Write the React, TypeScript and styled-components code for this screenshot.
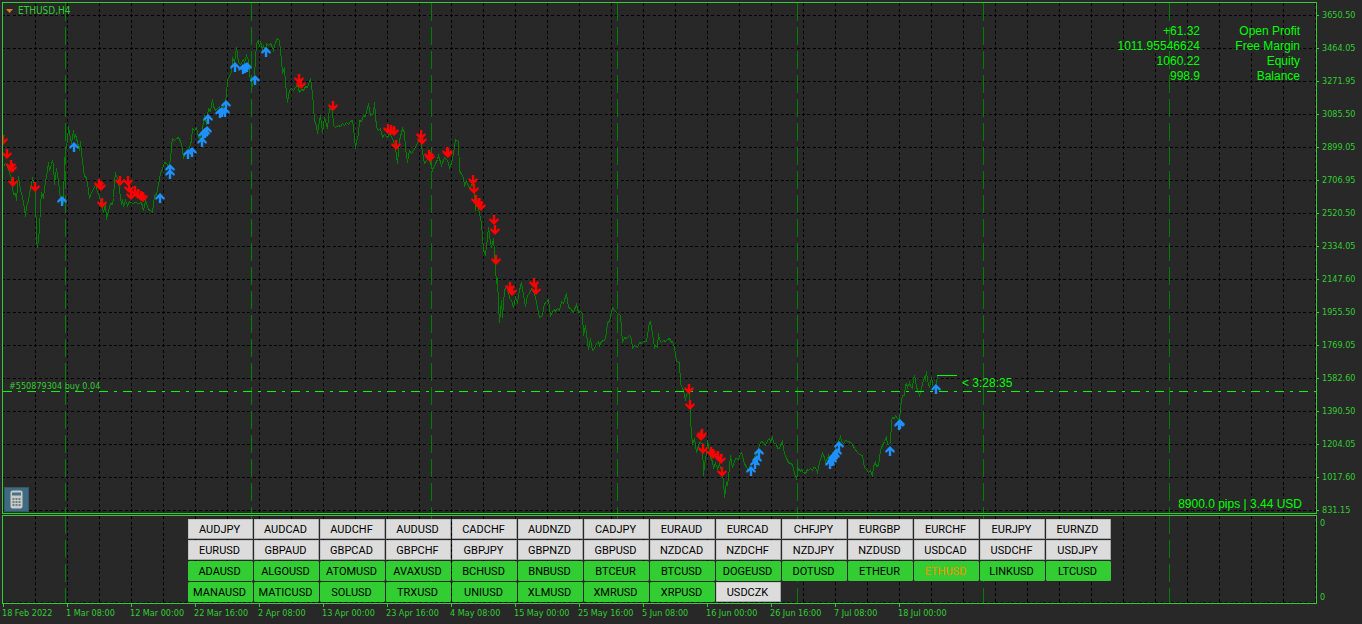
import styled, { createGlobalStyle } from "styled-components";

type Point = [number, number];

const GlobalStyle = createGlobalStyle`
  * {
    box-sizing: border-box;
  }
  body {
    margin: 0;
    background: #282828;
  }
`;

const smallFont = `"DejaVu Sans Condensed", "DejaVu Sans", "Noto Sans", sans-serif`;
const labelFont = `"Liberation Sans", Arial, sans-serif`;

const Terminal = styled.main`
  display: flex;
  flex-direction: column;
  gap: 1px;
  height: 100vh;
  padding: 2px 0 0 2px;
  overflow: hidden;
  background: #282828;
  color: #32cd32;
  font-family: ${smallFont};
  font-size: 9px;
`;

const Row = styled.div<{ $grow?: boolean }>`
  display: flex;
  flex: ${({ $grow }) => ($grow ? "1 1 0" : "none")};
  min-height: 0;
`;

const Frame = styled.section`
  position: relative;
  display: flex;
  flex-direction: column;
  flex: 1;
  min-width: 0;
  border: 1px solid #32cd32;
`;

const Plot = styled.svg`
  position: absolute;
  inset: 0;
  width: 100%;
  height: 100%;
`;

const Header = styled.h1`
  position: relative;
  display: flex;
  align-items: center;
  gap: 5px;
  height: 15px;
  margin: 0;
  padding-left: 3px;
  font-size: 10px;
  line-height: 12px;
  font-weight: 400;
`;

const Account = styled.dl`
  position: relative;
  display: grid;
  justify-content: end;
  margin: 6px 16px 0 0;
  color: #00ff00;
  font: 12px/15px ${labelFont};
  text-align: right;
`;

const AccountLine = styled.div`
  display: flex;
  flex-direction: row-reverse;
  dt {
    width: 100px;
  }
  dd {
    margin: 0;
  }
`;

const ChartFooter = styled.div`
  position: relative;
  display: flex;
  justify-content: space-between;
  align-items: flex-end;
  margin-top: auto;
  padding: 0 14px 1px 1px;
`;

const CalcButton = styled.button`
  display: grid;
  place-items: center;
  width: 25px;
  height: 25px;
  padding: 0;
  border: 1px solid #36566a;
  background: #3f6a84;
`;

const Pips = styled.output`
  color: #00ff00;
  font: 12px/16px ${labelFont};
`;

const PriceAxis = styled.ul`
  display: flex;
  flex-direction: column;
  gap: 21px;
  flex: none;
  width: 45px;
  margin: 0;
  padding: 7px 0 0;
  list-style: none;
`;

const Price = styled.li`
  display: flex;
  align-items: center;
  gap: 3px;
  flex: none;
  height: 12px;
  line-height: 12px;
  &::before {
    content: "";
    width: 2px;
    height: 1px;
    background: #32cd32;
  }
`;

const ZeroAxis = styled.div`
  display: flex;
  flex-direction: column;
  justify-content: space-between;
  width: 45px;
  padding: 2px 3px 1px;
  line-height: 12px;
`;

const SymbolGrid = styled.div`
  position: relative;
  display: grid;
  grid-template-columns: repeat(14, 65px);
  grid-auto-rows: 20px;
  gap: 1px;
  padding: 3px 0 1px 185px;
`;

const SymbolButton = styled.button<{ $crypto: boolean; $active: boolean }>`
  padding: 2px 2px 0 0;
  border: 1px solid;
  border-color: ${({ $crypto }) =>
    $crypto ? "#32cd32" : "#c4c4c4 #a6a6a6 #a6a6a6 #c4c4c4"};
  border-radius: 1px;
  background: ${({ $crypto }) => ($crypto ? "#32cd32" : "#dcdcdc")};
  color: ${({ $active }) => ($active ? "#ff8c00" : "#000")};
  font: 11px/16px Roboto, sans-serif;
`;

const TimeAxis = styled.ul`
  display: flex;
  flex: none;
  height: 20px;
  margin: -1px 0 0;
  padding: 0;
  list-style: none;
`;

const Time = styled.li`
  flex: 0 0 64px;
  line-height: 12px;
  white-space: nowrap;
  &::before {
    content: "";
    display: block;
    width: 1px;
    height: 3px;
    margin-left: 1px;
    background: #32cd32;
  }
`;

const prices = [
  "3650.50", "3464.05", "3271.95", "3085.50", "2899.05", "2706.95", "2520.50", "2334.05",
  "2147.60", "1955.50", "1769.05", "1582.60", "1390.50", "1204.05", "1017.60", "831.15",
];

const times = [
  "18 Feb 2022", "1 Mar 08:00", "12 Mar 00:00", "22 Mar 16:00", "2 Apr 08:00",
  "13 Apr 00:00", "23 Apr 16:00", "4 May 08:00", "15 May 00:00", "25 May 16:00",
  "5 Jun 08:00", "16 Jun 00:00", "26 Jun 16:00", "7 Jul 08:00", "18 Jul 00:00",
];

const account = [
  { label: "Open Profit", value: "+61.32" },
  { label: "Free Margin", value: "1011.95546624" },
  { label: "Equity", value: "1060.22" },
  { label: "Balance", value: "998.9" },
];

const forex = [
  "AUDJPY", "AUDCAD", "AUDCHF", "AUDUSD", "CADCHF", "AUDNZD", "CADJPY", "EURAUD",
  "EURCAD", "CHFJPY", "EURGBP", "EURCHF", "EURJPY", "EURNZD", "EURUSD", "GBPAUD",
  "GBPCAD", "GBPCHF", "GBPJPY", "GBPNZD", "GBPUSD", "NZDCAD", "NZDCHF", "NZDJPY",
  "NZDUSD", "USDCAD", "USDCHF", "USDJPY",
];

const crypto = [
  "ADAUSD", "ALGOUSD", "ATOMUSD", "AVAXUSD", "BCHUSD", "BNBUSD", "BTCEUR", "BTCUSD",
  "DOGEUSD", "DOTUSD", "ETHEUR", "ETHUSD", "LINKUSD", "LTCUSD", "MANAUSD", "MATICUSD",
  "SOLUSD", "TRXUSD", "UNIUSD", "XLMUSD", "XMRUSD", "XRPUSD",
];

const symbols = [...forex, ...crypto, "USDCZK"];

const months = [65, 251, 431, 617, 797, 983, 1169];

const closes = `3,166 5,163 7,166 9,172 11,178 13,194 15,193 16,200 17,185 18,176 20,190 22,196
24,208 25,216 26,206 28,200 30,188 32,178 34,184 35,192 36,240 37,247 38,238 39,230 40,205 41,193
43,197 44,188 46,176 48,162 49,170 51,164 52,160 53,165 54,184 56,168 58,180 59,190 60,199 62,198
63,203 64,160 66,145 67,140 68,126 70,138 71,143 73,130 74,138 75,134 77,142 79,150 80,141 81,152
83,168 84,176 86,177 88,190 89,198 91,192 93,189 95,184 97,191 99,196 101,205 103,212 105,203
106,219 108,210 110,203 112,204 113,197 114,180 115,173 118,180 119,190 121,204 122,199 123,206
125,200 127,205 129,201 132,203 135,202 138,203 141,202 143,210 145,200 148,209 150,210 152,212
153,204 154,195 156,194 158,184 160,173 162,168 164,162 166,163 168,166 170,160 171,145 172,138
174,140 176,138 178,137 180,141 182,148 183,158 185,152 187,150 189,148 190,144 191,140 192,128
194,130 196,127 198,137 200,138 202,128 204,115 206,124 208,108 210,111 212,99 213,106 215,110
217,108 219,106 221,112 223,106 225,102 226,94 227,80 229,75 231,72 232,57 234,62 236,47 238,62
240,64 243,59 244,62 246,55 248,60 249,75 251,82 252,85 254,75 255,58 256,43 258,40 259,46 260,41
262,49 263,46 265,50 266,43 268,45 270,43 272,47 273,50 275,42 277,38 279,40 280,50 281,60 282,72
284,68 285,82 287,102 289,90 291,88 293,90 295,87 297,84 299,92 301,89 303,90 305,86 307,87 310,78
312,93 314,120 316,126 317,133 320,115 322,132 324,117 327,128 329,108 332,110 333,125 335,127
338,125 340,126 342,123 344,125 346,122 348,124 350,121 352,120 353,127 355,148 356,142 358,133
359,120 361,121 363,115 365,116 367,108 368,103 370,115 373,113 374,102 376,127 378,130 380,128
382,137 384,134 387,137 389,133 392,138 395,147 397,163 399,140 402,128 404,132 405,148 407,162
409,150 411,153 413,150 415,147 417,142 420,138 422,152 424,163 426,160 428,158 430,162 432,170
435,163 437,159 438,155 441,165 444,157 447,160 449,167 451,163 453,153 455,139 458,141 459,170
461,174 463,177 464,185 466,181 469,188 472,183 474,193 475,210 476,203 478,207 479,213 481,223
483,250 485,254 487,237 488,227 490,242 491,247 493,238 494,253 495,267 496,283 497,278 498,305
499,322 501,300 502,317 504,290 507,285 509,298 511,300 513,307 515,297 517,302 519,290 521,282
523,295 525,306 527,295 529,293 531,288 533,291 535,297 537,307 539,317 542,315 544,303 546,302
548,299 550,316 552,311 554,309 555,311 557,308 559,310 561,301 563,303 566,293 568,307 570,308
573,312 576,304 578,312 580,311 582,313 583,335 585,325 588,349 590,338 592,350 594,348 596,343
598,341 599,345 601,341 603,340 605,339 607,322 609,321 612,307 614,310 617,313 620,315 622,342
624,337 626,338 629,335 631,338 632,348 634,345 637,347 639,342 641,343 643,341 646,341 648,328
649,322 650,321 652,333 654,347 655,345 657,347 658,333 659,339 661,342 663,340 665,341 667,339
669,338 671,342 672,341 674,347 676,361 679,362 680,383 682,388 683,390 685,400 686,394 689,392
690,420 692,444 694,438 696,452 699,442 702,443 703,475 704,464 706,453 707,440 710,457 712,461
713,467 715,463 717,468 719,464 721,470 723,480 724,497 726,482 727,485 729,467 730,455 732,467
733,464 735,458 738,459 740,453 741,452 744,463 746,467 748,470 750,464 752,463 754,456 757,453
759,444 761,441 763,442 765,445 767,440 769,438 770,441 772,437 773,442 776,444 777,448 779,448
780,445 782,441 784,453 786,458 788,462 790,463 792,464 794,473 796,478 798,468 800,471 801,469
803,472 805,473 807,469 808,470 810,468 812,470 813,467 815,467 817,472 819,462 822,453 824,457
825,462 828,455 830,459 832,457 835,448 837,443 840,436 841,441 843,443 845,440 848,441 850,442
852,444 854,448 857,452 859,454 862,455 864,467 866,469 868,472 870,470 872,476 873,466 875,462
876,466 878,465 880,450 881,447 883,443 884,441 886,436 887,444 890,443 891,420 892,417 894,418
895,415 897,418 899,420 900,407 902,395 904,395 905,384 906,383 907,387 909,382 910,386 912,388
913,378 914,375 916,386 917,390 919,395 921,388 922,383 924,377 925,379 926,371 927,380 929,387
931,377 933,388 935,386 937,376`;

const buys: Point[] = [
  [62, 201], [74, 147], [160, 198], [170, 169], [170, 174], [188, 154], [192, 152], [202, 142],
  [203, 135], [205, 133], [207, 131], [208, 119], [220, 113], [222, 112], [225, 112], [226, 105],
  [235, 67], [243, 69], [245, 68], [247, 67], [255, 80], [266, 52], [751, 471], [755, 464],
  [757, 460], [759, 453], [830, 464], [832, 461], [833, 458], [835, 456], [837, 453], [839, 446],
  [890, 451], [899, 425], [900, 424], [936, 389],
];

const sells: Point[] = [
  [3, 140], [7, 154], [11, 165], [12, 168], [13, 182], [35, 187], [99, 184], [101, 186],
  [102, 203], [120, 181], [128, 181], [129, 188], [131, 195], [135, 191], [138, 194], [141, 196],
  [143, 197], [299, 79], [301, 84], [333, 106], [388, 129], [391, 130], [394, 131], [396, 145],
  [421, 135], [422, 140], [429, 155], [430, 157], [447, 152], [448, 153], [473, 180], [474, 189],
  [476, 200], [479, 203], [481, 206], [494, 220], [495, 230], [496, 260], [510, 287], [512, 291],
  [534, 283], [536, 290], [689, 389], [690, 405], [702, 434], [701, 436], [703, 449], [711, 452],
  [713, 454], [718, 456], [721, 459], [722, 472],
];

// one dash sits on every crossing, cells are 32 x 33
const columnDash = "3 3 3 2 3 3 3 2 3 3 3 2";
const rowDash = "3 2 3 3 3 2 3 2 3 3 3 2";

const columns = Array.from({ length: 80 }, (_, i) => 32.5 + i * 32);
const rows = Array.from({ length: 40 }, (_, i) => 12.5 + i * 33);

const Columns = () => (
  <g shapeRendering="crispEdges">
    {columns.map((x) => (
      <line key={x} x1={x} x2={x} y1="0" y2="100%" stroke="#000" strokeDasharray={columnDash} strokeDashoffset={22} />
    ))}
    {months.map((x) => (
      <line key={x} x1={x - 2.5} x2={x - 2.5} y1="0" y2="100%" stroke="#008000" strokeDasharray="18 6" />
    ))}
  </g>
);

const Arrow = ({ at: [x, y], down }: { at: Point; down?: boolean }) => (
  <path
    d="M0 -5L4.7 -0.3V1.6H3.2L1.2 -0.4V5H-1.2V-0.4L-3.2 1.6H-4.7V-0.3Z"
    fill={down ? "#ff0000" : "#1e90ff"}
    transform={`translate(${x} ${y})${down ? " scale(1 -1)" : ""}`}
  />
);

const PriceChart = () => (
  <Plot aria-label="ETHUSD H4 price">
    <g shapeRendering="crispEdges">
      {rows.map((y) => (
        <line key={y} x1="0" x2="100%" y1={y} y2={y} stroke="#000" strokeDasharray={rowDash} strokeDashoffset={1} />
      ))}
    </g>
    <Columns />
    <g transform="translate(-3 -3)">
      <polyline
        points={closes}
        transform="translate(0.5 0.5)"
        fill="none"
        stroke="#008000"
        shapeRendering="crispEdges"
      />
      <line x1="937" x2="957" y1="375.5" y2="375.5" stroke="#00ff00" shapeRendering="crispEdges" />
    </g>
    <line
      x1="0"
      x2="100%"
      y1="388.5"
      y2="388.5"
      stroke="#00ff00"
      strokeDasharray="9 6 3 6"
      shapeRendering="crispEdges"
    />
    <g transform="translate(-3 -3)">
      {sells.map((at, i) => (
        <Arrow key={i} at={at} down />
      ))}
      {buys.map((at, i) => (
        <Arrow key={i} at={at} />
      ))}
      <text x="9" y="389" fill="#32cd32">
        #550879304 buy 0.04
      </text>
      <text x="962" y="387" fill="#00ff00" fontFamily="Liberation Sans, Arial, sans-serif" fontSize="12">
        &lt; 3:28:35
      </text>
    </g>
  </Plot>
);

const CalcIcon = () => (
  <svg width="13" height="19" viewBox="0 0 13 19" aria-hidden="true">
    <rect x="0.5" y="0.5" width="12" height="18" rx="2" fill="#cfcac0" />
    <rect x="2" y="2.5" width="9" height="3" fill="#47728b" />
    {[8, 11, 14].map((y) =>
      [2, 5, 8].map((x) => (
        <rect key={`${x}-${y}`} x={x + 0.5} y={y} width="2" height="2" fill="#5f8296" />
      ))
    )}
  </svg>
);

const App = () => {
  return (
    <>
      <GlobalStyle />
      <Terminal>
        <Row $grow>
          <Frame>
            <PriceChart />
            <Header>
              <svg width="7" height="4" viewBox="0 0 7 4" aria-hidden="true">
                <path d="M0 0H7L3.5 4Z" fill="#e07828" />
              </svg>
              <span>ETHUSD,H4</span>
            </Header>
            <Account>
              {account.map(({ label, value }) => (
                <AccountLine key={label}>
                  <dt>{label}</dt>
                  <dd>{value}</dd>
                </AccountLine>
              ))}
            </Account>
            <ChartFooter>
              <CalcButton type="button" aria-label="Calculator">
                <CalcIcon />
              </CalcButton>
              <Pips>8900.0 pips | 3.44 USD</Pips>
            </ChartFooter>
          </Frame>
          <PriceAxis>
            {prices.map((price) => (
              <Price key={price}>{price}</Price>
            ))}
          </PriceAxis>
        </Row>
        <Row>
          <Frame>
            <Plot aria-hidden="true">
              <Columns />
              <line
                x1="0"
                x2="100%"
                y1="86.5"
                y2="86.5"
                stroke="#000"
                strokeDasharray={rowDash}
                shapeRendering="crispEdges"
              />
            </Plot>
            <SymbolGrid>
              {symbols.map((symbol) => (
                <SymbolButton
                  key={symbol}
                  type="button"
                  $crypto={crypto.includes(symbol)}
                  $active={symbol === "ETHUSD"}
                >
                  {symbol}
                </SymbolButton>
              ))}
            </SymbolGrid>
          </Frame>
          <ZeroAxis>
            <span>0</span>
            <span>0</span>
          </ZeroAxis>
        </Row>
        <TimeAxis>
          {times.map((time) => (
            <Time key={time}>{time}</Time>
          ))}
        </TimeAxis>
      </Terminal>
    </>
  );
};

export default App;
